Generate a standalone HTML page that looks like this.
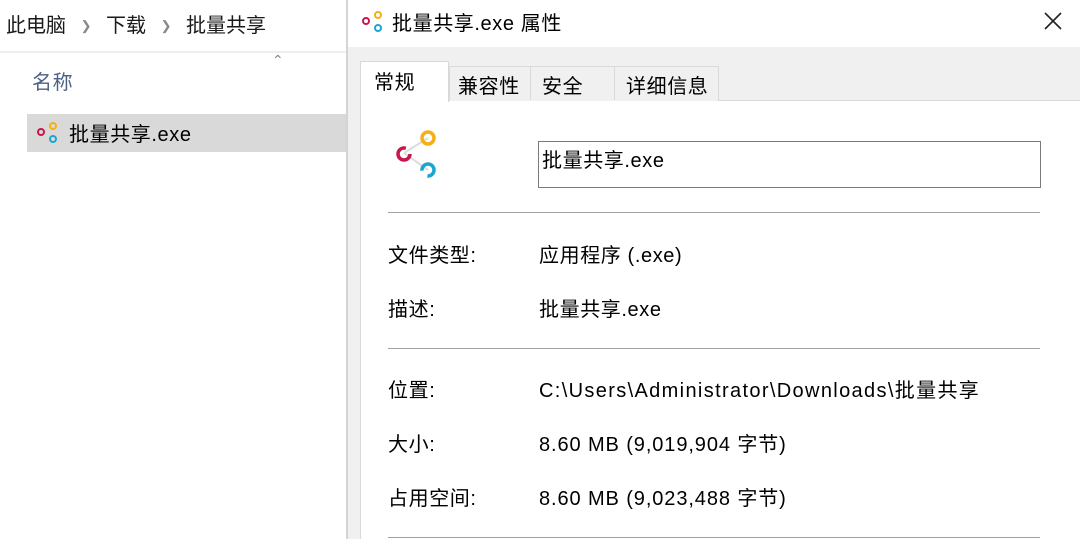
<!DOCTYPE html>
<html><head><meta charset="utf-8"><style>
*{margin:0;padding:0;box-sizing:border-box}
body{width:1080px;height:539px;overflow:hidden;background:#fff;font-family:"Liberation Sans","Noto Sans CJK SC",sans-serif;color:#000;position:relative}
.a{position:absolute;white-space:nowrap}
.t{font-size:20px;letter-spacing:0.6px}
.sep{position:absolute;left:388px;width:652px;height:1px;background:#a0a0a0}
</style></head><body>
<!-- left -->
<div class="a t" style="left:6px;top:9px;color:#1a1a1a;letter-spacing:0">此电脑 <span style="color:#888;font-size:13px;margin:0 9px;position:relative;top:-2px">&#x276F;</span> 下载 <span style="color:#888;font-size:13px;margin:0 9px;position:relative;top:-2px">&#x276F;</span> 批量共享</div>
<div class="a" style="left:0;top:51px;width:346px;height:2px;background:#eee"></div>
<div class="a" style="left:272px;top:52px;color:#888;font-size:14px">&#x2303;</div>
<div class="a t" style="left:32px;top:66px;color:#4d6185">名称</div>
<div class="a" style="left:27px;top:114px;width:319px;height:38px;background:#d9d9d9"></div>
<svg class="a" style="left:36px;top:121px" width="24" height="24"><circle cx="5" cy="11" r="3" fill="none" stroke="#c8174a" stroke-width="2"/><circle cx="17" cy="5" r="3" fill="none" stroke="#f5b014" stroke-width="2"/><circle cx="17" cy="18" r="3" fill="none" stroke="#1aa6d3" stroke-width="2"/></svg>
<div class="a t" style="left:69px;top:118px">批量共享.exe</div>
<div class="a" style="left:346px;top:0;width:2px;height:539px;background:#d4d4d4"></div>
<!-- right -->
<div class="a" style="left:348px;top:47px;width:732px;height:492px;background:#f0f0f0"></div>
<svg class="a" style="left:360px;top:9px" width="24" height="26"><circle cx="6" cy="12" r="3" fill="none" stroke="#c8174a" stroke-width="2"/><circle cx="18" cy="6" r="3" fill="none" stroke="#f5b014" stroke-width="2"/><circle cx="18" cy="19" r="3" fill="none" stroke="#1aa6d3" stroke-width="2"/></svg>
<div class="a t" style="left:392px;top:7px">批量共享.exe 属性</div>
<svg class="a" style="left:1044px;top:12px" width="18" height="18"><path d="M1 1L17 17M17 1L1 17" stroke="#222" stroke-width="1.6"/></svg>
<div class="a" style="left:360px;top:100px;width:720px;height:439px;background:#fff;border-left:1px solid #d9d9d9;border-top:1px solid #d9d9d9"></div>
<div class="a" style="left:449px;top:66px;width:270px;height:35px;background:#f0f0f0;border:1px solid #d9d9d9;border-bottom:none"></div>
<div class="a" style="left:530px;top:66px;width:1px;height:34px;background:#d9d9d9"></div>
<div class="a" style="left:614px;top:66px;width:1px;height:34px;background:#d9d9d9"></div>
<div class="a" style="left:360px;top:61px;width:89px;height:41px;background:#fff;border:1px solid #d9d9d9;border-bottom:none"></div>
<div class="a t" style="left:374px;top:66px">常规</div>
<div class="a t" style="left:458px;top:70px">兼容性</div>
<div class="a t" style="left:542px;top:70px">安全</div>
<div class="a t" style="left:626px;top:70px">详细信息</div>
<svg class="a" style="left:390px;top:125px" width="56" height="60"><line x1="14" y1="28" x2="38" y2="13" stroke="#ddd" stroke-width="2"/><line x1="14" y1="28" x2="38" y2="45" stroke="#ddd" stroke-width="2"/><circle cx="14" cy="29" r="6" fill="none" stroke="#c8174a" stroke-width="3.5" stroke-dasharray="30 8"/><circle cx="38" cy="13" r="6" fill="none" stroke="#f5b014" stroke-width="3.5"/><circle cx="38" cy="45" r="6" fill="none" stroke="#1aa6d3" stroke-width="3.5" stroke-dasharray="30 8" stroke-dashoffset="20"/></svg>
<div class="a" style="left:538px;top:141px;width:503px;height:47px;border:1px solid #7a7a7a"></div>
<div class="a t" style="left:542px;top:144px">批量共享.exe</div>
<div class="sep" style="top:212px"></div>
<div class="a t" style="left:388px;top:239px">文件类型:</div><div class="a t" style="left:539px;top:239px">应用程序 (.exe)</div>
<div class="a t" style="left:388px;top:293px">描述:</div><div class="a t" style="left:539px;top:293px">批量共享.exe</div>
<div class="sep" style="top:348px"></div>
<div class="a t" style="left:388px;top:374px">位置:</div><div class="a t" style="left:539px;top:374px;letter-spacing:1.35px">C:\Users\Administrator\Downloads\批量共享</div>
<div class="a t" style="left:388px;top:428px">大小:</div><div class="a t" style="left:539px;top:428px;letter-spacing:0.9px">8.60 MB (9,019,904 字节)</div>
<div class="a t" style="left:388px;top:482px">占用空间:</div><div class="a t" style="left:539px;top:482px;letter-spacing:0.9px">8.60 MB (9,023,488 字节)</div>
<div class="sep" style="top:537px"></div>
</body></html>
